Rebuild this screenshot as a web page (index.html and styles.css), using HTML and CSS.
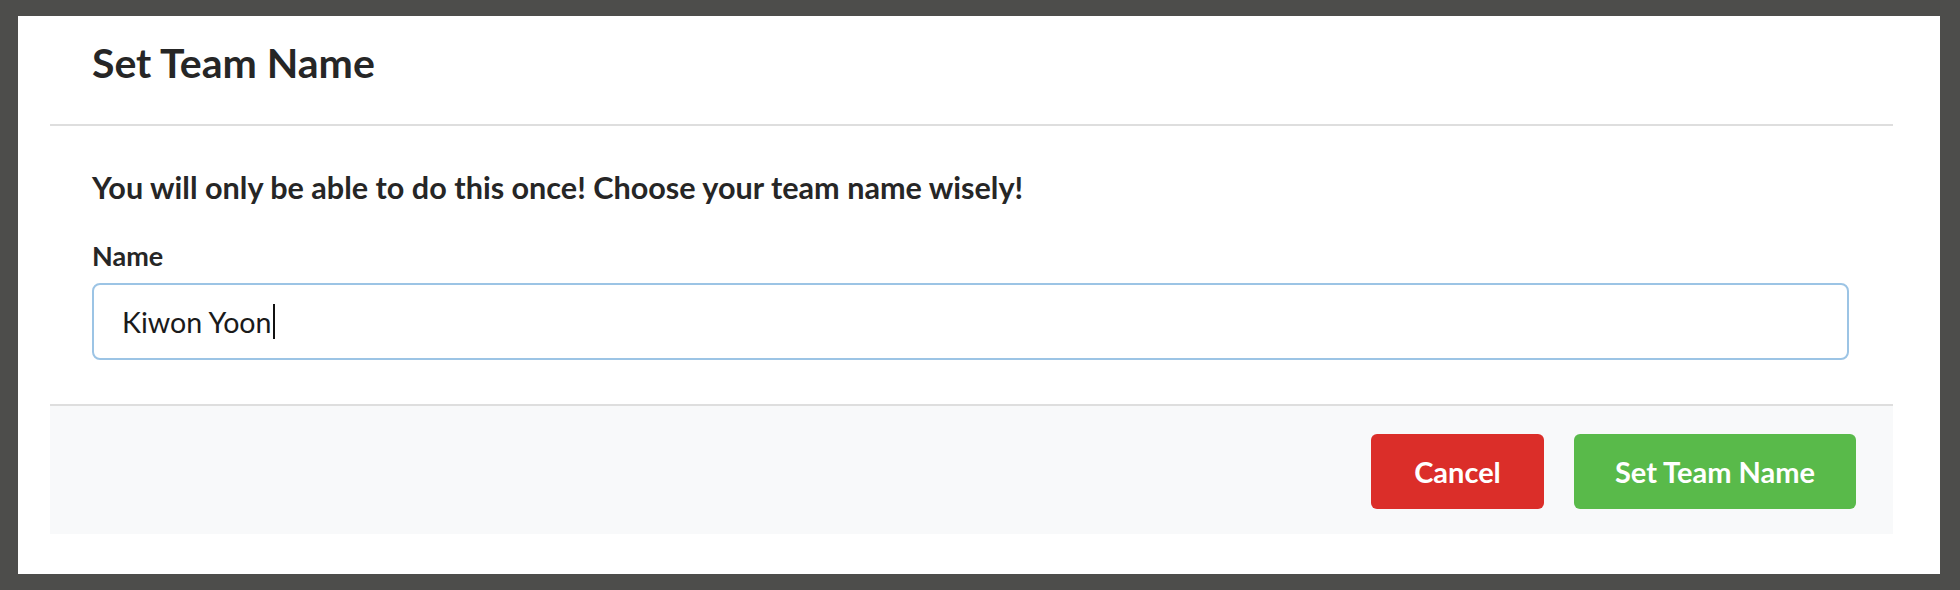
FILE: index.html
```html
<!DOCTYPE html>
<html lang="en">
<head>
<meta charset="utf-8">
<title>Set Team Name</title>
<link rel="stylesheet" href="styles.css">
</head>
<body>
<div class="frame">
  <div class="modal">
    <div class="modal-header">
      <h2 class="modal-title">Set Team Name</h2>
    </div>
    <div class="modal-body">
      <p class="warning">You will only be able to do this once! Choose your team name wisely!</p>
      <label class="field-label" for="team-name">Name</label>
      <div class="input-box">
        <span class="input-text">Kiwon Yoon</span><span class="caret"></span>
      </div>
    </div>
    <div class="modal-footer">
      <button class="btn btn-cancel" type="button">Cancel</button>
      <button class="btn btn-submit" type="button">Set Team Name</button>
    </div>
  </div>
</div>
</body>
</html>
```

FILE: styles.css
```css
html, body {
  margin: 0;
  padding: 0;
  height: 100%;
}

body {
  background: #4d4d4b;
  font-family: Lato, "Open Sans", sans-serif;
  color: #262626;
  padding: 16px 20px 16px 18px;
  box-sizing: border-box;
}

.frame {
  background: #ffffff;
  height: 558px;
  padding: 0 47px 0 32px;
  box-sizing: border-box;
}

.modal {
  display: flex;
  flex-direction: column;
}

.modal-header {
  height: 108px;
  border-bottom: 2px solid #dedede;
  padding: 0 42px;
  display: flex;
  align-items: center;
}

.modal-title {
  margin: 0;
  font-size: 41px;
  font-weight: 700;
  color: #262626;
  line-height: 1;
  position: relative;
  top: -8px;
}

.modal-body {
  padding: 0 44px 0 42px;
  height: 278px;
  box-sizing: border-box;
  display: flex;
  flex-direction: column;
}

.warning {
  margin: 0;
  padding-top: 43px;
  font-size: 30.6px;
  font-weight: 700;
  line-height: 38px;
}

.field-label {
  margin-top: 34px;
  font-size: 27px;
  font-weight: 700;
  line-height: 30px;
}

.input-box {
  margin-top: 12px;
  height: 77px;
  border: 2px solid #9cc4e5;
  border-radius: 8px;
  box-sizing: border-box;
  display: flex;
  align-items: center;
  padding-left: 28px;
}

.input-text {
  font-size: 28.6px;
  color: #1a1a1a;
  font-weight: 400;
}

.caret {
  display: inline-block;
  width: 2px;
  height: 35px;
  background: #111;
  margin-left: 1px;
}

.modal-footer {
  border-top: 2px solid #dedede;
  background: #f8f9fa;
  height: 126px;
  display: flex;
  align-items: center;
  justify-content: flex-end;
  gap: 30px;
  padding: 2px 37px 0 0;
  box-sizing: content-box;
}

.btn {
  border: none;
  border-radius: 6px;
  height: 75px;
  font-family: Lato, "Open Sans", sans-serif;
  font-size: 29px;
  font-weight: 700;
  color: #ffffff;
  padding: 0;
}

.btn-cancel {
  background: #db2e29;
  width: 173px;
}

.btn-submit {
  background: #59ba4a;
  width: 282px;
}
```
